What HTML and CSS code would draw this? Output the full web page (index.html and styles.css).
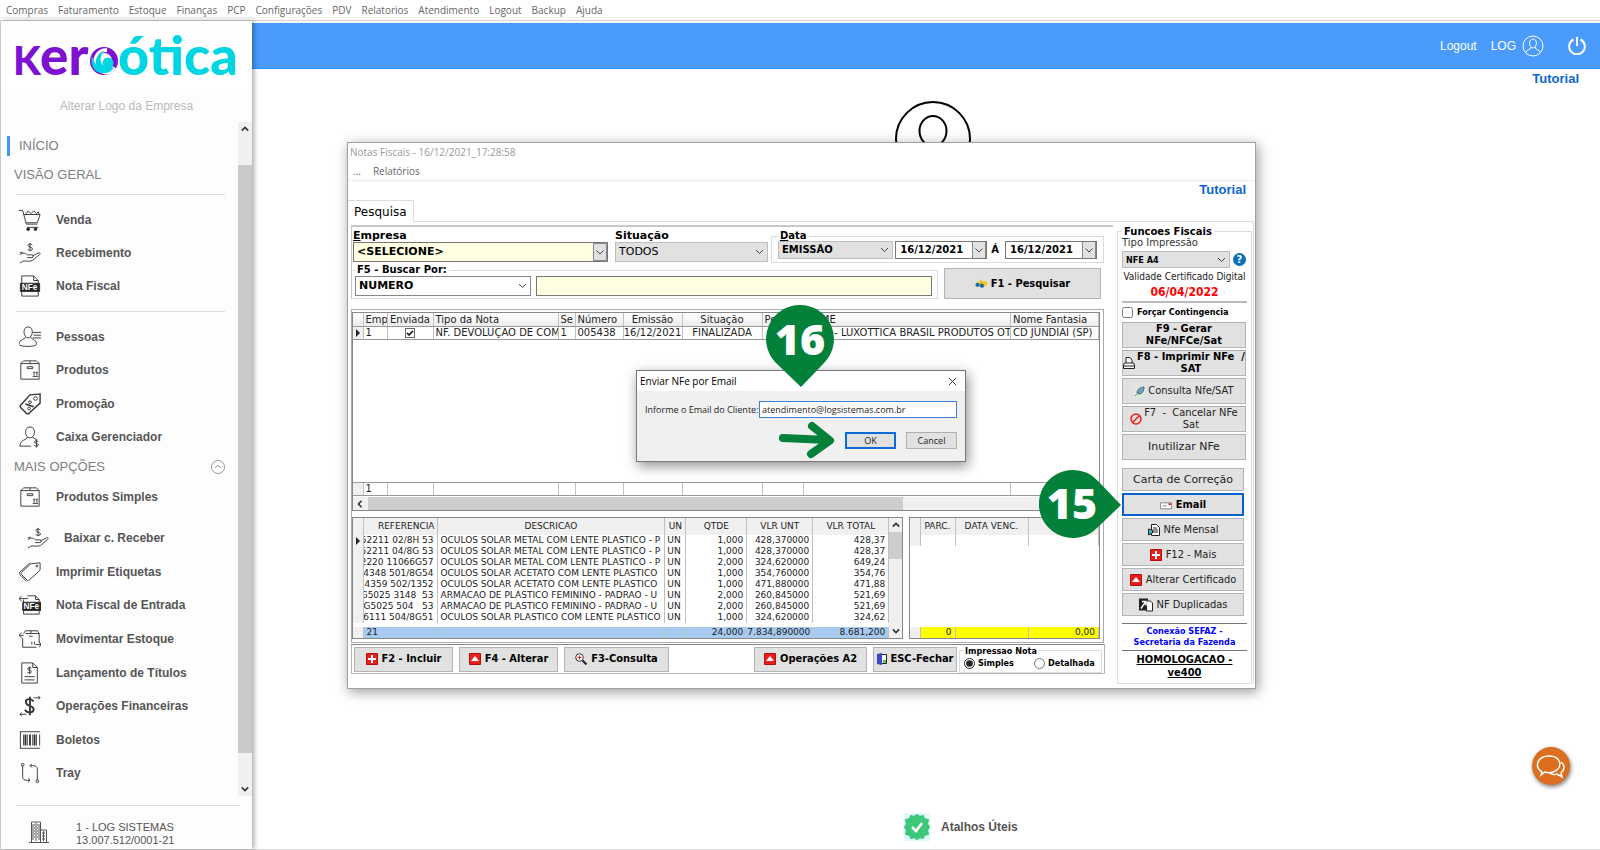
FILE: index.html
```html
<!DOCTYPE html>
<html lang="pt-BR">
<head>
<meta charset="UTF-8">
<meta name="viewport" content="width=device-width,initial-scale=1.0">
<title>Kero Ótica - Notas Fiscais</title>
<link rel="stylesheet" href="styles.css">
</head>
<body>

<!-- shared icons -->
<svg class="defs" aria-hidden="true">
  <symbol id="i-box" viewBox="0 0 24 24"><path d="M2 5h20v17H2zM2 5l3-3h14l3 3M12 2v3M9 8.500h6v2H9zM15 19h6M16.500 18v-4M19.500 18v-4M15.500 15l1-1 1 1M18.500 15l1-1 1 1"/></symbol>
  <symbol id="i-hand" viewBox="0 0 24 24"><path d="M1 14c3-3 6-2 8 0h5c2 0 2 3 0 3H9M15 15l6-3c2-1 3 1 1 2l-7 6c-3 2-8 0-11 1l-3 2M1 12l3-1M14.500 3.500C13 1.500 9.500 2 9.800 4c.3 2 4.700 1.200 4.900 3.500 0 2-3.500 2.500-5.200.5M12 1v9"/></symbol>
  <symbol id="i-plus" viewBox="0 0 12 12"><path fill="#e8211d" stroke="#b30d0d" d="M.5.5h11v11H.5z"/><path fill="none" stroke="#fff" stroke-width="2" d="M6 2v8M2 6h8"/></symbol>
  <symbol id="i-up" viewBox="0 0 12 12"><path fill="#e8211d" stroke="#b30d0d" d="M.5.5h11v11H.5z"/><path fill="#fff" d="M6 3l4 5H2z"/></symbol>
  <symbol id="i-left" viewBox="0 0 10 10"><path fill="none" stroke="#333" stroke-width="2" d="M7 1L3 5l4 4"/></symbol>
  <symbol id="i-top" viewBox="0 0 10 10"><path fill="none" stroke="#333" stroke-width="2" d="M1 7l4-4 4 4"/></symbol>
  <symbol id="i-bottom" viewBox="0 0 10 10"><path fill="none" stroke="#333" stroke-width="2" d="M1 3l4 4 4-4"/></symbol>
</svg>

<nav class="menubar">
  <a href="#">Compras</a>
  <a href="#">Faturamento</a>
  <a href="#">Estoque</a>
  <a href="#">Finanças</a>
  <a href="#">PCP</a>
  <a href="#">Configurações</a>
  <a href="#">PDV</a>
  <a href="#">Relatorios</a>
  <a href="#">Atendimento</a>
  <a href="#">Logout</a>
  <a href="#">Backup</a>
  <a href="#">Ajuda</a>
</nav>

<div class="app">
  <aside class="sidebar">
    <div class="logo">
      <svg viewBox="0 0 222 54" role="img" aria-label="Kero Ótica">
        <text class="logo-k" x="-2" y="41">K</text>
        <text class="logo-p" x="25" y="41">er</text>
        <circle cx="89" cy="27" r="11" fill="none" stroke="#7d12d0" stroke-width="6"/>
        <path d="M92 16C82 16 77 27 83 34s13 5 16-1" fill="none" stroke="#fff" stroke-width="4"/>
        <path d="M77 20c-2 9 1 18 9 19 7 1 11-2 13-6-3 1-7 1-10-1-5-3-4-11 0-15-5 1-9 7-8 13-3-3-4-6-4-10z" fill="#00d5e4"/>
        <circle cx="93" cy="29" r="5.500" fill="#00d5e4"/>
        <text class="logo-c" x="103" y="41">ótica</text>
      </svg>
    </div>
    <a class="logo-link" href="#">Alterar Logo da Empresa</a>

    <div class="side-scroll">
      <div class="side-menu">
        <a class="home" href="#">INÍCIO</a>
        <h2 class="side-title">VISÃO GERAL</h2>
        <ul class="group group-3">
          <li><a href="#"><svg viewBox="0 0 24 24"><path d="M0 1.500h4l4 15h12M5 6h18l-3 9H8M9 20h12M7 6l3-4 3 3 3-3 3 3 2-2 1 3"/><circle cx="10" cy="22" r="1.500" fill="#222"/><circle cx="18" cy="22" r="1.500" fill="#222"/></svg>Venda</a></li>
          <li><a href="#"><svg><use href="#i-hand"/></svg>Recebimento</a></li>
          <li><a href="#"><svg viewBox="0 0 24 24"><path d="M3 9V1h13l5 5v3M16 1v5h5M3 18v5h18v-5"/><path d="M1.500 9h21v9h-21z" fill="#222"/><text x="3" y="16.500">NFe</text></svg>Nota Fiscal</a></li>
        </ul>
        <ul class="group group-4">
          <li><a href="#"><svg viewBox="0 0 24 24"><path d="M10 1c-7 0-5 12 0 12S17 1 10 1zM7 12c0 3-7 2-7 8 0 3 19 3 19 0 0-6-6-5-6-8M15 7h9M16 10h8M15 13h9"/></svg>Pessoas</a></li>
          <li><a href="#"><svg><use href="#i-box"/></svg>Produtos</a></li>
          <li><a href="#"><svg viewBox="0 0 24 24"><path stroke-width="1.500" d="M12 2l11-1v10L11 22c-1 1-2 1-3 0l-6-6c-1-1-1-2 0-3zM7 12l9 3"/><circle cx="18" cy="6" r="2"/><circle cx="12" cy="10" r="1.500"/><circle cx="11" cy="17" r="1.500"/></svg>Promoção</a></li>
          <li><a href="#"><svg viewBox="0 0 24 24"><path d="M12 1c-7 0-6 12 0 12s7-12 0-12zM9 12c0 4-8 2-8 10h12M15 12c0 2 4 2 5 3M21 17c-2-1.500-4-1-4 .5 0 2 4 1 4 3s-3 2-4.500.5M19 15.500v8"/></svg>Caixa Gerenciador</a></li>
        </ul>
        <h2 class="side-title more">MAIS OPÇÕES
          <svg viewBox="0 0 14 14"><circle cx="7" cy="7" r="6.500"/><path d="M4 8l3-3 3 3"/></svg>
        </h2>
        <ul class="group sub">
          <li><a href="#"><svg><use href="#i-box"/></svg>Produtos Simples</a></li>
          <li class="indent"><a href="#"><svg><use href="#i-hand"/></svg>Baixar c. Receber</a></li>
        </ul>
        <ul class="group rest">
          <li><a href="#"><svg viewBox="0 0 24 24"><path d="M13 3l10-1v8L11 21c-1 1-1 1-2 0l-6-6c-1-1-1-2 0-3zM12 2L1 12c-1 1-1 2 0 3l7 7"/><circle cx="19.500" cy="5.500" r="1"/></svg>Imprimir Etiquetas</a></li>
          <li><a href="#"><svg viewBox="0 0 24 24"><path d="M9 2h9l4 4v3M18 2v4h4M5 18v4h17v-4M0 5h10M3 2L0 5l3 3M5 9V6"/><path d="M4 9h20v9H4z" fill="#222"/><text x="5" y="16.500">NFe</text></svg>Nota Fiscal de Entrada</a></li>
          <li><a href="#"><svg viewBox="0 0 24 24"><path d="M4 11v10h15M5 6l2-3h13l2 3v10M7 6h15M13 3v3M11 9h4M0 8h5M3 5L0 8l3 3M18 18h6M22 15l2 3-2 3M14 18v-3M17 18v-3"/></svg>Movimentar Estoque</a></li>
          <li><a href="#"><svg viewBox="0 0 24 24"><path d="M3 1h12l5 5v17H3zM15 1v5h5M6 16h11M6 19.500h11M13.500 7c-2-1.500-4-1-4 .5 0 2 4 1 4 3s-3 2-4.500.5M11.500 5v8"/></svg>Lançamento de Títulos</a></li>
          <li><a href="#"><svg viewBox="0 0 24 24"><path stroke-width="2" d="M16 7c-3-4-9-3-8.500 1 .5 5 9 3 8.500 8-.5 4-7 4-9.500 0M12 2v20"/><path d="M16 3h7M21 1l2 2-2 2M8 21H1M3 19l-2 2 2 2"/></svg>Operações Financeiras</a></li>
          <li><a href="#"><svg viewBox="0 0 24 24"><path d="M1 3h22M1 21h22M1.500 3v18M22.500 6v12M5 6v12M9 6v12M15 6v12M19 6v12"/><path stroke-width="2" d="M7 6v12M12 6v12M17 6v12"/></svg>Boletos</a></li>
          <li><a href="#"><svg viewBox="0 0 24 24"><path d="M4 4v12c0 3 2 4 5 4h3M10 18l2 2-2 2M20 20V8c0-3-2-4-5-4h-3M14 2l-2 2 2 2"/><circle cx="4" cy="3" r="1.500"/><circle cx="20" cy="21" r="1.500"/></svg>Tray</a></li>
        </ul>
      </div>
      <div class="vscroll side-bar" aria-hidden="true">
        <svg><use href="#i-top"/></svg>
        <span class="thumb"></span>
        <svg><use href="#i-bottom"/></svg>
      </div>
    </div>

    <div class="company">
      <svg viewBox="0 0 20 22"><path d="M0 21.500h20M2.500 21V1h9v20M11.500 9h6v12M5 4h1M8 4h1M5 7h1M8 7h1M5 10h1M8 10h1M5 13h1M8 13h1M5 16h1M8 16h1M13 12h1M15 12h1M13 15h1M15 15h1M13 18h1M15 18h1M4 3v16M7 2v18M10 3v16M14.500 10v10"/></svg>
      <p>1 - LOG SISTEMAS<br>13.007.512/0001-21</p>
    </div>
  </aside>

  <main class="desk">
    <header class="topbar">
      <a href="#">Logout</a>
      <a class="user" href="#">LOG
        <svg viewBox="0 0 22 22"><circle cx="11" cy="11" r="10"/><path d="M11 4c-5 0-4 9 0 9s5-9 0-9zM9 12c0 3-4 2-5 5M13 12c0 3 4 2 5 5"/></svg>
      </a>
      <a class="power" href="#" aria-label="Sair"><svg viewBox="0 0 18 18"><path d="M5.500 2.500a7.800 7.800 0 1 0 7 0M9 0v9"/></svg></a>
    </header>
    <a class="tutorial" href="#">Tutorial</a>
    <svg class="big-user" viewBox="0 0 78 78"><circle cx="39" cy="39" r="37"/><ellipse cx="39" cy="31" rx="13.500" ry="15"/></svg>

    <div class="shortcuts">
      <svg viewBox="0 0 28 28"><path fill="#def8fc" d="M1 0h26v28H1z"/><path fill="#3cc878" stroke="#3cc878" stroke-width="2" stroke-linejoin="round" d="M14 2l3 2 3-1 1 3 4 1-1 4 2 3-2 3 1 4-4 1-1 3-3-1-3 2-3-2-3 1-1-3-4-1 1-4-2-3 2-3-1-4 4-1 1-3 3 1z"/><path fill="none" stroke="#fff" stroke-width="2.500" d="M9 14l4 4 6-8"/></svg>
      <a href="#">Atalhos Úteis</a>
    </div>
    <button class="chat" aria-label="Chat"><svg viewBox="0 0 30 24"><path d="M6 18c-8-5-5-16 7-16s15 12 4 16c-3 1-5 1-8 0l-4 3zM25 8c5 4 3 8 0 11l1 4-5-3c-3 1-6 0-7-1"/></svg></button>
  </main>
</div>

<section class="win">
  <h1 class="win-title">Notas Fiscais - 16/12/2021_17:28:58</h1>
  <nav class="win-menu"><a href="#">...</a><a href="#">Relatórios</a></nav>
  <a class="win-tutorial" href="#">Tutorial</a>
  <div class="tabs"><button class="tab">Pesquisa</button></div>

  <div class="win-body">
    <div class="left">
      <div class="search">
        <div class="row">
          <div class="field empresa">
            <label for="empresa"><u>E</u>mpresa</label>
            <select id="empresa" class="combo yellow"><option>&lt;SELECIONE&gt;</option></select>
          </div>
          <div class="field situacao">
            <label for="situacao">Situação</label>
            <select id="situacao"><option>TODOS</option></select>
          </div>
          <fieldset class="data">
            <legend><u>D</u>ata</legend>
            <select aria-label="Tipo de data"><option>EMISSÃO</option></select>
            <select class="combo date" aria-label="Data inicial"><option>16/12/2021</option></select>
            <span>Á</span>
            <select class="combo date" aria-label="Data final"><option>16/12/2021</option></select>
          </fieldset>
        </div>
        <div class="row row-find">
          <fieldset class="find">
            <legend>F5 - Buscar Por:</legend>
            <select aria-label="Buscar por"><option>NUMERO</option></select>
            <input type="text" class="yellow" aria-label="Texto da busca">
          </fieldset>
          <button class="btn bold f1"><svg class="ico" viewBox="0 0 14 10"><path fill="#f6c71b" d="M4 2l3-2 3 2 4 0v4l-4 3-4-2z"/><circle cx="3" cy="6" r="2.500" fill="#1b6aa8"/><circle cx="8" cy="7" r="2.500" fill="#1b6aa8"/></svg>F1 - Pesquisar</button>
        </div>
      </div>

      <div class="grids">
        <div class="box notas">
          <table>
            <colgroup><col class="w10"><col class="w24"><col class="w46"><col class="w125"><col class="w17"><col class="w48"><col class="w59"><col class="w80"><col class="w41"><col><col class="w88"></colgroup>
            <thead>
              <tr><th></th><th>Emp</th><th class="c">Enviada</th><th>Tipo da Nota</th><th>Se</th><th>Número</th><th class="c">Emissão</th><th class="c">Situação</th><th>Pessoa</th><th>NOME</th><th>Nome Fantasia</th></tr>
            </thead>
            <tbody>
              <tr><td class="ind"><i class="mark"></i></td><td>1</td><td class="c"><input type="checkbox" class="tick" aria-label="Enviada" checked></td><td>NF. DEVOLUÇÃO DE COM</td><td>1</td><td>005438</td><td class="c">16/12/2021</td><td class="c">FINALIZADA</td><td></td><td>0021 - LUXOTTICA BRASIL PRODUTOS OTI</td><td>CD JUNDIAI (SP)</td></tr>
              <tr class="fill"><td colspan="11"></td></tr>
            </tbody>
            <tfoot>
              <tr><td class="ind"></td><td>1</td><td></td><td></td><td></td><td></td><td></td><td></td><td></td><td></td><td></td></tr>
            </tfoot>
          </table>
          <div class="hscroll" aria-hidden="true"><svg><use href="#i-left"/></svg><span class="thumb"></span></div>
        </div>

        <div class="bottom">
          <div class="box itens">
            <table>
              <colgroup><col class="w10"><col class="w74"><col><col class="w21"><col class="w61"><col class="w66"><col class="w76"></colgroup>
              <thead>
                <tr><th></th><th class="r">REFERENCIA</th><th class="c">DESCRICAO</th><th class="c">UN</th><th class="c">QTDE</th><th class="c">VLR UNT</th><th class="c">VLR TOTAL</th></tr>
              </thead>
              <tbody>
                <tr><td class="ind"><i class="mark"></i></td><td><div class="ref">52211 02/8H 53</div></td><td>OCULOS SOLAR METAL COM LENTE PLASTICO - P</td><td>UN</td><td class="r">1,000</td><td class="r">428,370000</td><td class="r">428,37</td></tr>
                <tr><td class="ind"></td><td><div class="ref">52211 04/8G 53</div></td><td>OCULOS SOLAR METAL COM LENTE PLASTICO - P</td><td>UN</td><td class="r">1,000</td><td class="r">428,370000</td><td class="r">428,37</td></tr>
                <tr><td class="ind"></td><td><div class="ref">2220 11066G57</div></td><td>OCULOS SOLAR METAL COM LENTE PLASTICO - P</td><td>UN</td><td class="r">2,000</td><td class="r">324,620000</td><td class="r">649,24</td></tr>
                <tr><td class="ind"></td><td><div class="ref">4348 501/8G54</div></td><td>OCULOS SOLAR ACETATO COM LENTE PLASTICO</td><td>UN</td><td class="r">1,000</td><td class="r">354,760000</td><td class="r">354,76</td></tr>
                <tr><td class="ind"></td><td><div class="ref">4359 502/1352</div></td><td>OCULOS SOLAR ACETATO COM LENTE PLASTICO</td><td>UN</td><td class="r">1,000</td><td class="r">471,880000</td><td class="r">471,88</td></tr>
                <tr><td class="ind"></td><td><div class="ref">G5025 3148&nbsp; 53</div></td><td>ARMACAO DE PLASTICO FEMININO - PADRAO - U</td><td>UN</td><td class="r">2,000</td><td class="r">260,845000</td><td class="r">521,69</td></tr>
                <tr><td class="ind"></td><td><div class="ref">-G5025 504&nbsp;&nbsp; 53</div></td><td>ARMACAO DE PLASTICO FEMININO - PADRAO - U</td><td>UN</td><td class="r">2,000</td><td class="r">260,845000</td><td class="r">521,69</td></tr>
                <tr><td class="ind"></td><td><div class="ref">6111 504/8G51</div></td><td>OCULOS SOLAR PLASTICO COM LENTE PLASTICO</td><td>UN</td><td class="r">1,000</td><td class="r">324,620000</td><td class="r">324,62</td></tr>
                <tr class="fill"><td colspan="7"></td></tr>
              </tbody>
              <tfoot>
                <tr><td class="ind"></td><td>21</td><td></td><td></td><td class="r">24,000</td><td class="r tight">7.834,890000</td><td class="r">8.681,200</td></tr>
              </tfoot>
            </table>
            <div class="vscroll" aria-hidden="true"><svg><use href="#i-top"/></svg><span class="thumb"></span><svg><use href="#i-bottom"/></svg></div>
          </div>
          <div class="box parcelas">
            <table>
              <colgroup><col class="w10"><col class="w35"><col class="w73"><col></colgroup>
              <thead><tr><th></th><th class="c">PARC.</th><th class="c">DATA VENC.</th><th></th></tr></thead>
              <tbody>
                <tr><td class="ind"></td><td></td><td></td><td></td></tr>
                <tr class="fill"><td colspan="4"></td></tr>
              </tbody>
              <tfoot><tr><td class="ind"></td><td class="r">0</td><td></td><td class="r">0,00</td></tr></tfoot>
            </table>
          </div>
        </div>
      </div>

      <div class="toolbar">
        <button class="btn bold"><svg class="ico"><use href="#i-plus"/></svg>F2 - Incluir</button>
        <button class="btn bold"><svg class="ico"><use href="#i-up"/></svg>F4 - Alterar</button>
        <button class="btn bold f3"><svg class="ico" viewBox="0 0 12 12"><circle cx="4.500" cy="4.500" r="3.800" fill="#fff" stroke="#333"/><path d="M7.500 7.500l4 4" stroke="#222" stroke-width="2"/><path d="M4.500 2.500v4M2.500 4.500h4" stroke="#e8211d"/></svg>F3-Consulta</button>
        <button class="btn bold oper"><svg class="ico"><use href="#i-up"/></svg>Operações A2</button>
        <button class="btn bold esc"><svg class="ico" viewBox="0 0 12 12"><path fill="#fff" stroke="#222" d="M3.500 1.500h7v9h-7z"/><path fill="#3b46c9" d="M1 1l5-1v12l-5-1z"/><path fill="#55c255" d="M7 7h3v3H7z"/></svg>ESC-Fechar</button>
        <fieldset class="impressao">
          <legend>Impressao Nota</legend>
          <label><input type="radio" name="imp" checked>Simples</label>
          <label><input type="radio" name="imp">Detalhada</label>
        </fieldset>
      </div>
    </div>

    <fieldset class="fiscal">
      <legend>Funcoes Fiscais</legend>
      <label class="tipo" for="tipo">Tipo Impressão</label>
      <div class="tipo-row">
        <select id="tipo"><option>NFE A4</option></select>
        <span class="help">?</span>
      </div>
      <p class="validade">Validade Certificado Digital</p>
      <p class="vence">06/04/2022</p>
      <label class="conting"><input type="checkbox">Forçar Contingencia</label>
      <div class="stack tall">
        <button class="btn bold">F9 - Gerar<br>NFe/NFCe/Sat</button>
        <button class="btn bold"><svg class="ico" viewBox="0 0 12 12"><path fill="#fff" stroke="#222" d="M3 6V.5h4L9 3v3M1.500 6h9l1 2v3.500H.5V8zM1 9h10"/></svg><span>F8 - Imprimir NFe &nbsp;/<br>SAT</span></button>
        <button class="btn cond"><svg class="ico" viewBox="0 0 12 12"><path fill="#dfe8dc" d="M0 0h12v12H0z"/><path fill="#7aa5c9" stroke="#35648c" d="M3 8c0-4 4-6 7-6 0 4-2 7-5 7z"/><path stroke="#5b8f4a" d="M1 11l6-6"/></svg>Consulta Nfe/SAT</button>
        <button class="btn cond"><svg class="ico" viewBox="0 0 12 12"><circle cx="6" cy="6" r="5" fill="none" stroke="#e8211d" stroke-width="1.500"/><path stroke="#e8211d" stroke-width="1.500" d="M2.500 9.500l7-7"/></svg><span>F7 &nbsp;- &nbsp;Cancelar NFe<br>Sat</span></button>
        <button class="btn">Inutilizar NFe</button>
      </div>
      <div class="stack">
        <button class="btn">Carta de Correção</button>
        <button class="btn bold focus"><svg class="ico" viewBox="0 0 14 10"><path fill="#fff" stroke="#777" d="M.5 2.500h13v7H.5zM3 6h5"/><path fill="#e8211d" d="M10 3h3v2h-3z"/></svg>Email</button>
        <button class="btn cond"><svg class="ico" viewBox="0 0 12 12"><path fill="#fff" stroke="#222" d="M3.500.5h5l3 3v8h-8zM5 4h4M5 6h5M5 8h5"/><path fill="#3fb5b5" stroke="#222" d="M.5 5l4 1v3l-4 2z"/></svg>Nfe Mensal</button>
        <button class="btn cond"><svg class="ico"><use href="#i-plus"/></svg>F12 - Mais</button>
        <button class="btn cond"><svg class="ico"><use href="#i-up"/></svg>Alterar Certificado</button>
        <button class="btn cond"><svg class="ico wide" viewBox="0 0 14 13"><path fill="#222" d="M0 0h9v12H0z"/><path fill="#fff" stroke="#222" d="M7.500 2.500h4l2 2v8h-6z"/><path stroke="#fff" stroke-width="1.500" d="M2 10l4-6M3 3h4v4"/></svg>NF Duplicadas</button>
      </div>
      <p class="sefaz">Conexão SEFAZ -<br>Secretaria da Fazenda</p>
      <p class="homolog">HOMOLOGACAO -<br>ve400</p>
    </fieldset>
  </div>
</section>

<form class="dialog">
  <div class="dialog-title">Enviar NFe por Email
    <button type="button" aria-label="Fechar"><svg viewBox="0 0 10 10"><path d="M1 1l8 8M9 1L1 9"/></svg></button>
  </div>
  <div class="dialog-field">
    <label for="email">Informe o Email do Cliente:</label>
    <input type="text" id="email" value="atendimento@logsistemas.com.br">
  </div>
  <div class="dialog-actions">
    <button type="button" class="focus">OK</button>
    <button type="button">Cancel</button>
  </div>
</form>

<!-- step markers -->
<svg class="pin pin-16" viewBox="0 0 68 82"><path d="M34 0a34 34 0 0 1 25 57L35 82 9 57A34 34 0 0 1 34 0z"/><text x="34" y="50">16</text></svg>
<svg class="pin pin-15" viewBox="0 0 82 68"><path d="M34 0a34 34 0 0 1 25 11l23 24-24 23A34 34 0 1 1 34 0z"/><text x="33" y="49">15</text></svg>
<svg class="arrow" viewBox="0 0 56 38"><path d="M4 17l44 2M33 5l18 14.500L32 33"/></svg>

</body>
</html>
```
FILE: styles.css
```css
* { box-sizing:border-box; }
body { margin:0; min-height:100vh; display:flex; flex-direction:column; background:#fff; color:#000; font-family:"Liberation Sans",Arial,sans-serif; position:relative; overflow:hidden; }
a { color:inherit; text-decoration:none; }
h1, h2, p, ul { margin:0; padding:0; font-weight:normal; list-style:none; }
fieldset { margin:0; padding:0; border:1px solid #dcdcdc; min-width:0; }
legend { padding:0 2px; font-weight:bold; }
button, input, select { font:inherit; color:inherit; margin:0; }
.defs { position:absolute; width:0; height:0; }

/* menu bar */
.menubar { display:flex; gap:10px; height:18px; padding-left:6px; border-bottom:1px solid #f0f0f0; font:10px/20px "Open Sans",sans-serif; color:#666; }
.app { flex:1; display:flex; margin-top:2px; border:1px solid #d6d6d6; border-width:1px 0 1px 1px; }

/* sidebar */
.sidebar { width:251px; display:flex; flex-direction:column; background:#fdfdfd; box-shadow:2px 0 5px rgba(0,0,0,.35); z-index:1; }
.logo { margin-top:13px; padding:0 14px; background:#fff; }
.logo svg { display:block; width:222px; height:54px; overflow:visible; }
.logo text { font-family:Lato,sans-serif; font-weight:900; }
.logo-k { font-size:40px; fill:#7d12d0; }
.logo-p { font-size:53px; fill:#7d12d0; }
.logo-c { font-size:54px; fill:#00d5e4; }
.logo-link { margin-top:8px; text-align:center; font-size:12px; line-height:20px; color:#bbb; }
.side-scroll { flex:1; display:flex; margin-top:6px; }
.side-menu { flex:1; display:flex; flex-direction:column; padding:14px 13px 6px 6px; color:#808080; font-size:13px; }
.home { border-left:3px solid #3d96fb; padding-left:9px; line-height:20px; }
.side-title { font-size:13px; line-height:18px; margin-top:10px; padding-left:7px; }
.side-title.more { display:flex; justify-content:space-between; margin:0; line-height:26px; }
.more svg { width:14px; height:14px; margin-top:6px; fill:none; stroke:#999; }
.group { display:flex; flex-direction:column; margin-left:9px; font-size:12px; font-weight:bold; color:#555; }
.group li { flex:1; display:flex; align-items:center; }
.group a { display:flex; align-items:center; gap:15px; padding-left:3px; }
.group svg { width:22px; height:22px; fill:none; stroke:#333; }
.group svg text { font:bold 9px "Liberation Sans",sans-serif; fill:#fff; stroke:none; }
.group-3, .group-4 { border-top:1px solid #ddd; padding-top:8px; }
.group-3 { height:109px; margin-top:10px; }
.group-4 { height:143px; margin-top:8px; }
.sub li { min-height:34px; }
.sub .indent { margin:7px 0 0 8px; }
.rest { flex:1; }
.vscroll { width:13px; display:flex; flex-direction:column; align-items:center; background:#f0f0f0; }
.vscroll svg { width:8px; height:14px; }
.vscroll .thumb { width:100%; height:27px; margin-bottom:auto; background:#cdcdcd; }
.side-bar { width:14px; }
.side-bar .thumb { flex:1; margin:29px 0; background:#cacaca; }
.company { display:flex; gap:27px; height:44px; margin:9px 12px 0 15px; padding:15px 0 0 13px; border-top:1px solid #ddd; font-size:11px; line-height:13px; color:#555; }
.company svg { width:20px; height:22px; fill:none; stroke:#555; }

/* desktop */
.desk { flex:1; position:relative; }
.topbar { display:flex; justify-content:flex-end; align-items:center; gap:14px; height:46px; margin-top:2px; padding-right:14px; background:#4a9bfc; border-bottom:1px solid #1e8fff; color:#fff; font-size:12px; }
.topbar svg { fill:none; stroke:#fff; }
.user { display:flex; align-items:center; gap:6px; }
.user svg { width:22px; height:22px; }
.power { margin-left:10px; }
.power svg { display:block; width:18px; height:18px; stroke-width:2; }
.tutorial, .win-tutorial { display:block; text-align:right; font:bold 13px/18px "Liberation Sans",Arial,sans-serif; color:#0a67d0; }
.tutorial { padding:1px 21px 0; }
.big-user { position:absolute; left:642px; top:79px; width:78px; height:78px; fill:none; stroke:#000; stroke-width:2; }
.shortcuts { position:absolute; left:651px; bottom:8px; display:flex; align-items:center; gap:10px; font-size:12px; font-weight:bold; color:#555; }
.shortcuts svg { width:28px; height:28px; }
.chat { position:absolute; right:30px; bottom:64px; width:38px; height:38px; padding:4px; border:0; border-radius:50%; background:#dc6f1f; box-shadow:1px 2px 4px rgba(0,0,0,.5); }
.chat svg { display:block; width:30px; height:26px; fill:none; stroke:#fff; stroke-width:1.5; }

/* notas fiscais window */
.win { position:absolute; left:347px; top:142px; width:909px; padding-bottom:4px; background:#fff; border:1px solid #a0a0a0; box-shadow:2px 3px 12px rgba(0,0,0,.4); z-index:2; font:10px/12px "DejaVu Sans",sans-serif; }
.win-title { padding:0 2px; font:10px/19px "Open Sans",sans-serif; color:#999; }
.win-menu { display:flex; gap:12px; padding-left:5px; border-bottom:1px solid #eee; font:10px/18px "Open Sans",sans-serif; color:#666; }
.win-tutorial { padding-right:9px; line-height:17px; }
.tabs { display:flex; border-bottom:1px solid #dcdcdc; margin-right:1px; }
.tab { height:22px; margin:2px 0 -1px; padding:0 6px; border:1px solid #dcdcdc; border-width:1px 1px 0 0; background:#fff; font-size:12px; }
.win-body { display:flex; gap:10px; margin-right:1px; padding:3px 1px 0 3px; border-right:1px solid #dcdcdc; }
.left { flex:1; min-width:0; }
select { appearance:none; height:20px; padding:0 16px 0 3px; border:1px solid #bdbdbd; border-radius:0; background:#e1e1e1 url("data:image/svg+xml,%3Csvg xmlns='http://www.w3.org/2000/svg' width='9' height='6'%3E%3Cpath d='M1 1l3.500 3.500L8 1' fill='none' stroke='%23444'/%3E%3C/svg%3E") no-repeat right 3px center; }
.combo { border-color:#777; background:#fff url("data:image/svg+xml,%3Csvg xmlns='http://www.w3.org/2000/svg' width='14' height='18'%3E%3Cpath d='M.5.5h13v17H.5z' fill='%23e1e1e1' stroke='%23888'/%3E%3Cpath d='M3.500 7.500L7 11l3.500-3.500' fill='none' stroke='%23444'/%3E%3C/svg%3E") no-repeat right center; }
.yellow { background-color:#ffffe1; }
.search { border-top:2px solid #c8c8c8; border-left:1px solid #c8c8c8; margin-right:-6px; padding:3px 9px 0 1px; }
.row { display:flex; align-items:flex-start; }
.field { display:flex; flex-direction:column; }
.field label { font-size:11px; line-height:12px; font-weight:bold; }
.field select { font-size:11px; }
.empresa { width:255px; margin-right:7px; }
.empresa select { font-weight:bold; }
.situacao { width:153px; margin-right:3px; }
.data { flex:1; display:flex; align-items:center; height:33px; padding:0 6px 4px; font-weight:bold; }
.data legend, .find legend { font-size:10px; line-height:12px; }
.data select { flex:1; height:18px; padding-right:12px; }
.data .date { flex:none; width:92px; margin-left:2px; padding-left:4px; }
.data span { margin:0 4px; }
.row-find { gap:6px; }
.find { flex:1; display:flex; gap:5px; height:35px; margin-top:1px; padding:0 5px 3px 2px; border-left:0; }
.find select { width:176px; padding-left:3px; background-color:#fff; border-color:#888; font-size:11px; font-weight:bold; }
.find input { flex:1; height:20px; border:1px solid #777; }
.btn { display:flex; align-items:center; justify-content:center; gap:4px; padding:0 2px; background:#e1e1e1; border:1px solid #b4b4b4; font:11px/12px "DejaVu Sans",sans-serif; color:#222; white-space:nowrap; }
.bold { font-family:"DejaVu Sans Condensed","DejaVu Sans",sans-serif; font-weight:bold; color:#000; }
.cond { font-family:"DejaVu Sans Condensed","DejaVu Sans",sans-serif; }
.ico { flex:none; width:12px; height:12px; fill:none; }
.ico.wide { width:14px; height:14px; }
.f1 { width:157px; height:31px; margin:5px 3px 0 0; }

/* tables */
.grids { margin:10px 3px 0 0; padding:2px 3px 3px 0; border:1px solid #aaa; }
.box { border:1px solid #888; background:#fff; }
table { width:100%; border-collapse:collapse; table-layout:fixed; color:#222; }
th, td { padding:0 2px; font-weight:normal; text-align:left; overflow:hidden; white-space:nowrap; border-right:1px solid #c0c0c0; }
.c { text-align:center; }
.r { text-align:right; }
.w10 { width:10px; } .w17 { width:17px; } .w21 { width:21px; } .w24 { width:24px; } .w35 { width:35px; }
.w41 { width:41px; } .w46 { width:46px; } .w48 { width:48px; } .w59 { width:59px; } .w61 { width:61px; }
.w66 { width:66px; } .w73 { width:73px; } .w74 { width:74px; } .w76 { width:76px; } .w80 { width:80px; }
.w88 { width:88px; } .w125 { width:125px; }
.ind { padding:0; background:#f0f0f0; }
.mark { display:block; width:0; height:0; margin-left:3px; border:4px solid transparent; border-left:4px solid #222; border-right:0; }
.fill td { border:0; }
.notas th { height:13px; line-height:13px; background:linear-gradient(#fff,#ececec); }
.notas th, .notas td { padding-right:0; border-bottom:1px solid #999; }
.notas td { height:13px; line-height:12px; }
.notas .c { padding-left:0; }
.notas .ind, .bottom td.ind { padding:0; }
.notas .fill td { height:143px; }
.tick { appearance:none; display:block; width:10px; height:10px; margin:0 auto; border:1px solid #666; background:url("data:image/svg+xml,%3Csvg xmlns='http://www.w3.org/2000/svg' width='8' height='8'%3E%3Cpath d='M1 4l2 2 4-4' fill='none' stroke='%23000' stroke-width='1.500'/%3E%3C/svg%3E") no-repeat center; }
.hscroll { display:flex; align-items:center; height:13px; margin-top:1px; padding-left:3px; background:#f0f0f0; }
.hscroll svg { width:8px; height:8px; margin-right:4px; }
.hscroll .thumb { width:72%; height:13px; background:#cdcdcd; }
.bottom { display:flex; gap:6px; margin-top:6px; }
.itens { flex:1; display:flex; min-width:0; }
.parcelas { width:191px; }
.bottom table { font-size:9px; line-height:11px; }
.bottom th { height:17px; background:#f0f0f0; }
.bottom td { height:11px; padding:0 3px; }
.bottom .itens .tight { padding:0 2px 0 0; }
.bottom .itens td:nth-child(4) { padding:0 2px; }
.ref { display:flex; justify-content:flex-end; overflow:hidden; margin-left:-3px; }
.itens .fill td { height:4px; }
.itens tfoot td { background:#a6caf0; }
.itens tfoot .ind { background:#f0f0f0; }
.parcelas .fill td { height:81px; }
.parcelas tfoot td { background:#ff0; }
.parcelas tfoot .ind { background:#f0f0f0; }

/* bottom buttons */
.toolbar { display:flex; gap:6px; align-items:center; height:30px; margin:1px 2px 0 0; padding:0 2px; border:1px solid #b4b4b4; border-top-color:#888; }
.toolbar .btn { width:99px; height:25px; }
.toolbar .f3 { width:105px; }
.toolbar .oper { width:113px; margin-left:auto; }
.toolbar .esc { width:84px; gap:2px; padding:0; }
.impressao { width:143px; display:flex; gap:20px; height:27px; margin-left:-4px; padding-left:4px; font:bold 9px/11px "DejaVu Sans Condensed","DejaVu Sans",sans-serif; }
.impressao legend { padding:0 1px; line-height:10px; }
.impressao label { display:flex; align-items:center; gap:3px; }
.impressao input { width:11px; height:11px; accent-color:#222; }

/* fiscal column */
.fiscal { width:135px; height:458px; margin-top:1px; padding:0 4px; text-align:center; }
.fiscal legend { line-height:11px; text-align:left; }
.tipo { display:block; text-align:left; color:#333; }
.tipo-row { display:flex; align-items:center; gap:3px; margin-top:2px; }
.tipo-row select { flex:none; width:108px; height:17px; font:bold 9px "DejaVu Sans Condensed","DejaVu Sans",sans-serif; }
.help { width:13px; height:13px; border-radius:50%; background:#0a6fb8; color:#fff; font-weight:bold; line-height:13px; }
.validade { margin-top:3px; font-family:"DejaVu Sans Condensed","DejaVu Sans",sans-serif; color:#222; white-space:nowrap; }
.vence { padding:2px 0; border-bottom:2px solid #bbb; font:bold 12px/14px "DejaVu Sans Condensed","DejaVu Sans",sans-serif; color:#f00; }
.conting { display:flex; align-items:center; gap:4px; height:18px; font:bold 9px "DejaVu Sans Condensed","DejaVu Sans",sans-serif; white-space:nowrap; }
.conting input { width:11px; height:11px; }
.stack { display:grid; grid-auto-rows:23px; gap:2px; margin:8px 3px 7px 0; }
.stack.tall { grid-auto-rows:26px; margin:1px 3px 0 0; }
.stack.tall .btn { gap:2px; padding:0; }
.focus { border:2px solid #0a62d0; }
.sefaz, .homolog { border-top:1px solid #777; font:bold 9px/11px "DejaVu Sans Condensed","DejaVu Sans",sans-serif; }
.sefaz { padding:2px 0; color:#00f; }
.homolog { padding-top:2px; font-size:11px; line-height:13px; text-decoration:underline; }

/* email dialog */
.dialog { position:absolute; left:636px; top:370px; width:330px; height:92px; background:#f0f0f0; border:1px solid #777; box-shadow:2px 4px 12px rgba(0,0,0,.45); z-index:3; font:9px/12px "Open Sans",sans-serif; color:#222; }
.dialog-title { display:flex; justify-content:space-between; align-items:center; height:20px; padding:0 8px 0 3px; background:#fff; font-size:10px; color:#000; }
.dialog-title button { padding:0; border:0; background:none; }
.dialog-title svg { display:block; width:9px; height:9px; fill:none; stroke:#222; }
.dialog-field { display:flex; justify-content:space-between; align-items:center; margin:10px 8px 0; white-space:nowrap; }
.dialog-field input { width:198px; height:17px; padding:0 2px; border:1px solid #3c7fd9; background:#fff; color:#222; }
.dialog-actions { display:flex; justify-content:flex-end; gap:10px; margin:14px 8px 0; }
.dialog-actions button { width:51px; height:17px; padding:0; background:#e1e1e1; border:1px solid #b0b0b0; line-height:12px; }
.dialog-actions .focus { border:2px solid #0a6cd6; }

.pin, .arrow { position:absolute; z-index:4; fill:#03803a; }
.pin text { font:800 43px "Open Sans",sans-serif; fill:#fff; text-anchor:middle; }
.pin-16 { left:766px; top:305px; width:68px; height:82px; }
.pin-15 { left:1039px; top:470px; width:82px; height:68px; }
.arrow { left:779px; top:421px; width:56px; height:38px; fill:none; stroke:#03803a; stroke-width:8; stroke-linecap:round; stroke-linejoin:round; }
```
